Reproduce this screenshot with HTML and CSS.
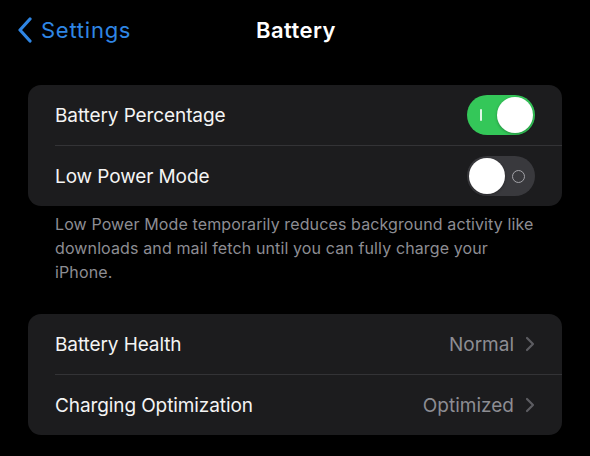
FILE: index.html
```html
<!DOCTYPE html>
<html lang="en">
<head>
<meta charset="utf-8">
<title>Battery</title>
<link rel="stylesheet" href="styles.css">
</head>
<body>
<header class="nav">
  <div class="back">
    <svg class="back-chev" width="16" height="26" viewBox="0 0 16 26"><path d="M13 2 L3 13 L13 24" fill="none" stroke="#2f86e4" stroke-width="3.2" stroke-linecap="round" stroke-linejoin="round"/></svg>
    <span class="back-label">Settings</span>
  </div>
  <h1 class="title">Battery</h1>
  <div></div>
</header>

<section class="group">
  <div class="row">
    <span class="label">Battery Percentage</span>
    <span class="switch on"><span class="mark-i"></span><span class="knob"></span></span>
  </div>
  <div class="sep"></div>
  <div class="row">
    <span class="label">Low Power Mode</span>
    <span class="switch off"><span class="knob"></span><span class="mark-o"></span></span>
  </div>
</section>
<p class="footer">Low Power Mode temporarily reduces background activity like downloads and mail fetch until you can fully charge your<br>iPhone.</p>

<section class="group group2">
  <div class="row">
    <span class="label">Battery Health</span>
    <span class="detail">Normal<svg class="chev" width="10" height="16" viewBox="0 0 10 16"><path d="M2 2 L8 8 L2 14" fill="none" stroke="#5c5c61" stroke-width="2.2" stroke-linecap="round" stroke-linejoin="round"/></svg></span>
  </div>
  <div class="sep"></div>
  <div class="row">
    <span class="label">Charging Optimization</span>
    <span class="detail">Optimized<svg class="chev" width="10" height="16" viewBox="0 0 10 16"><path d="M2 2 L8 8 L2 14" fill="none" stroke="#5c5c61" stroke-width="2.2" stroke-linecap="round" stroke-linejoin="round"/></svg></span>
  </div>
</section>
</body>
</html>
```
FILE: styles.css
```css
* { box-sizing: border-box; }
html, body { margin: 0; padding: 0; }
body {
  background: #000;
  width: 590px;
  height: 456px;
  overflow: hidden;
  font-family: Inter, "Noto Sans", "Liberation Sans", sans-serif;
  color: #f4f4f4;
}
.nav {
  height: 60px;
  display: grid;
  grid-template-columns: 1fr auto 1fr;
  align-items: center;
}
.back {
  display: flex;
  align-items: center;
  padding-left: 17px;
  gap: 8px;
  color: #2f86e4;
}
.back-chev { display: block; }
.back-label {
  font-size: 22px;
  letter-spacing: 0.75px;
}
.title {
  margin: 0 0 0 2px;
  font-size: 22px;
  font-weight: 600;
  letter-spacing: 0.45px;
  color: #fff;
}
.group {
  margin: 25px 28px 0 28px;
  background: #1c1c1e;
  border-radius: 13px;
  overflow: hidden;
}
.group2 { margin-top: 30px; }
.row {
  height: 60px;
  display: flex;
  align-items: center;
  justify-content: space-between;
  padding: 0 27px 0 27px;
}
.label {
  font-size: 19px;
  letter-spacing: -0.1px;
}
.sep {
  height: 1px;
  background: #333336;
  margin-left: 27px;
}
.switch {
  position: relative;
  width: 68px;
  height: 40px;
  border-radius: 20px;
  display: flex;
  align-items: center;
}
.switch.on { background: #34c759; justify-content: flex-end; padding: 0 2px; }
.switch.off { background: #39393d; padding: 0 2px; }
.knob {
  width: 36px;
  height: 36px;
  border-radius: 50%;
  background: #fff;
  box-shadow: 0 1px 3px rgba(0,0,0,0.3);
}
.mark-i {
  position: absolute;
  left: 13px;
  top: 14px;
  width: 2px;
  height: 12px;
  background: rgba(255,255,255,0.85);
  border-radius: 1px;
}
.mark-o {
  position: absolute;
  right: 10px;
  top: 13.5px;
  width: 13px;
  height: 13px;
  border-radius: 50%;
  border: 1.6px solid #a3a3a8;
}
.footer {
  margin: 6px 20px 0 55px;
  font-size: 16px;
  line-height: 24px;
  letter-spacing: 0.12px;
  color: #8d8d93;
}
.detail {
  display: flex;
  align-items: center;
  gap: 11px;
  font-size: 19px;
  color: #8d8d93;
}
.chev { display: block; }
```
